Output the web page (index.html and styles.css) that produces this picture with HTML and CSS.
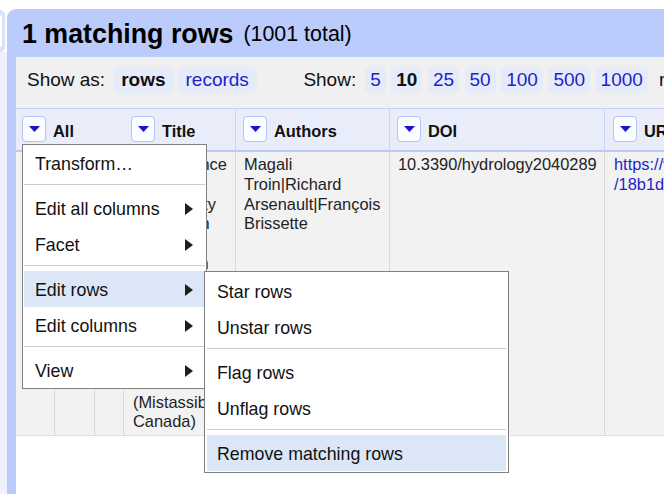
FILE: index.html
```html
<!DOCTYPE html>
<html>
<head>
<meta charset="utf-8">
<link rel="stylesheet" href="styles.css">
</head>
<body>
<div class="app">
  <div class="side">
    <div class="side-top"></div>
    <div class="side-tab"><div class="side-tab-inner"></div></div>
    <div class="side-rest"></div>
  </div>
  <div class="panel">
    <div class="panel-head"><span class="count">1 matching rows</span><span class="total">(1001 total)</span></div>
    <div class="panel-body">
      <div class="viewbar">
        <span class="label">Show as:</span>
        <span class="pill wide sel as-first">rows</span>
        <span class="pill wide link">records</span>
        <span class="label show">Show:</span>
        <span class="pill link first">5</span>
        <span class="pill sel">10</span>
        <span class="pill link">25</span>
        <span class="pill link">50</span>
        <span class="pill link">100</span>
        <span class="pill link">500</span>
        <span class="pill link">1000</span>
        <span class="label tail">rows</span>
      </div>
      <div class="grid">
        <div class="hcell all"><span class="dd"><svg width="11" height="6" viewBox="0 0 11 6"><polygon points="0,0 11,0 5.5,6" fill="#1616c8"/></svg></span>All</div>
        <div class="hcell sep"><span class="dd"><svg width="11" height="6" viewBox="0 0 11 6"><polygon points="0,0 11,0 5.5,6" fill="#1616c8"/></svg></span>Title</div>
        <div class="hcell sep"><span class="dd"><svg width="11" height="6" viewBox="0 0 11 6"><polygon points="0,0 11,0 5.5,6" fill="#1616c8"/></svg></span>Authors</div>
        <div class="hcell sep"><span class="dd"><svg width="11" height="6" viewBox="0 0 11 6"><polygon points="0,0 11,0 5.5,6" fill="#1616c8"/></svg></span>DOI</div>
        <div class="hcell url-h"><span class="dd"><svg width="11" height="6" viewBox="0 0 11 6"><polygon points="0,0 11,0 5.5,6" fill="#1616c8"/></svg></span>URL</div>

        <div class="cell narrow"></div>
        <div class="cell narrow"></div>
        <div class="cell narrow"></div>
        <div class="cell title">Performance and Uncertainty Evaluation of Snow Models on Snowmelt Flow Simulations over a Nordic Catchment (Mistassibi, Canada)</div>
        <div class="cell authors">Magali <span class="nw">Troin|Richard</span> <span class="nw">Arsenault|François</span> Brissette</div>
        <div class="cell">10.3390/hydrology2040289</div>
        <div class="cell url">https://www.semanticscholar.org/paper<wbr>/18b1d7a2e2a4d4b0d0c1e8f3</div>
      </div>
    </div>
  </div>

  <div class="menu">
    <div class="mi">Transform…</div>
    <div class="msep"></div>
    <div class="mi">Edit all columns<span class="arrow"></span></div>
    <div class="mi">Facet<span class="arrow"></span></div>
    <div class="msep"></div>
    <div class="mi hl">Edit rows<span class="arrow"></span></div>
    <div class="mi">Edit columns<span class="arrow"></span></div>
    <div class="msep"></div>
    <div class="mi">View<span class="arrow"></span></div>
  </div>

  <div class="menu submenu">
    <div class="mi">Star rows</div>
    <div class="mi">Unstar rows</div>
    <div class="msep"></div>
    <div class="mi">Flag rows</div>
    <div class="mi">Unflag rows</div>
    <div class="msep"></div>
    <div class="mi hl">Remove matching rows</div>
  </div>
</div>
</body>
</html>
```

FILE: styles.css
```css
html, body {
  margin: 0;
  padding: 0;
}
body {
  font-family: "Liberation Sans", Arial, sans-serif;
  background: #fff;
  width: 664px;
  height: 494px;
  overflow: hidden;
}
.app {
  position: relative;
  display: flex;
  height: 494px;
}
.side {
  width: 7px;
  flex: none;
  display: flex;
  flex-direction: column;
}
.side-top {
  height: 10px;
}
.side-tab {
  height: 42px;
  width: 5px;
  background: #d9e2fb;
  border-radius: 0 5px 5px 0;
  display: flex;
  align-items: center;
}
.side-tab-inner {
  width: 2px;
  height: 32px;
  background: #fff;
  border-radius: 0 3px 3px 0;
}
.side-rest {
  flex: 1;
  background: #eef1fb;
}
.panel {
  flex: 1;
  min-width: 0;
  margin-top: 9px;
  background: #bbcbfb;
  border-top-left-radius: 9px;
  padding-left: 9px;
  overflow: hidden;
  display: flex;
  flex-direction: column;
}
.panel-head {
  height: 48px;
  display: flex;
  align-items: center;
  padding-left: 6px;
  padding-top: 2px;
  box-sizing: border-box;
  white-space: nowrap;
  color: #000;
}
.count {
  font-weight: bold;
  font-size: 26.8px;
}
.total {
  font-size: 21.4px;
  margin-left: 10px;
}
.panel-body {
  flex: 1;
  background: #fff;
}
.viewbar {
  background: #f0f0f0;
  display: flex;
  align-items: center;
  padding: 10px 0 15px 11px;
  font-size: 19px;
  white-space: nowrap;
  color: #111;
}
.pill {
  height: 26px;
  line-height: 26px;
  padding: 0 5px;
  border-radius: 5px;
  background: #e6ebf9;
  margin-left: 5.5px;
}
.pill.wide {
  padding: 0 8px;
  margin-left: 4px;
}
.pill.as-first {
  margin-left: 8px;
}
.pill.first {
  margin-left: 9px;
}
.pill.sel {
  font-weight: bold;
  color: #111;
}
.pill.link {
  color: #1f1fcc;
}
.label.show {
  margin-left: 46.5px;
}
.label.tail {
  margin-left: 11px;
}
.grid {
  display: grid;
  grid-template-columns: 39px 40px 29px 112px 154px 215px 320px;
}
.hcell {
  box-sizing: border-box;
  height: 44px;
  background: #e9edfa;
  border-top: 1px solid #c3d0fa;
  border-bottom: 2px solid #b9c9f9;
  display: flex;
  align-items: center;
  gap: 7px;
  padding-left: 7px;
  padding-top: 4px;
  font-weight: bold;
  font-size: 16.4px;
  color: #111;
  white-space: nowrap;
}
.hcell.all {
  grid-column: span 3;
  padding-left: 6px;
}
.hcell.sep {
  border-right: 1px solid #c9d3f3;
}
.hcell.url-h {
  padding-left: 8px;
}
.dd {
  width: 24px;
  height: 26px;
  box-sizing: border-box;
  border: 1px solid #b3c2f2;
  border-radius: 4px;
  background: #fbfcff;
  display: flex;
  align-items: center;
  justify-content: center;
  flex: none;
  margin-top: -6px;
}
.dd svg {
  display: block;
}
.cell {
  background: #f2f2f2;
  border-right: 1px solid #d9d9d9;
  border-bottom: 1px dotted #cfcfcf;
  padding: 3px 8px 3px 8px;
  font-size: 16.4px;
  line-height: 19.8px;
  color: #222;
}
.cell.narrow {
  padding: 0;
}
.cell.title {
  padding-left: 9px;
  padding-right: 13px;
}
.cell.authors {
  padding-right: 6px;
}
.cell.url {
  padding-left: 9px;
  color: #1f1fcc;
}
.nw {
  white-space: nowrap;
}
.menu {
  position: absolute;
  left: 22px;
  top: 144px;
  width: 185px;
  box-sizing: border-box;
  background: #fff;
  border: 1px solid #808080;
  padding: 0 1px;
  font-size: 17.8px;
  color: #111;
}
.submenu {
  left: 204px;
  top: 271px;
  width: 305px;
  padding: 1px 2px;
}
.mi {
  height: 36px;
  line-height: 36px;
  padding-left: 11px;
  padding-right: 12px;
  padding-top: 1px;
  box-sizing: border-box;
  white-space: nowrap;
  display: flex;
  align-items: center;
  justify-content: space-between;
}
.submenu .mi {
  padding-left: 10px;
}
.mi.hl {
  background: #dbe7f7;
}
.arrow {
  width: 0;
  height: 0;
  border-left: 8px solid #1e1e1e;
  border-top: 6.5px solid transparent;
  border-bottom: 6.5px solid transparent;
}
.msep {
  height: 1px;
  background: #cdcdcd;
  margin: 3px 0 5px;
}
```
